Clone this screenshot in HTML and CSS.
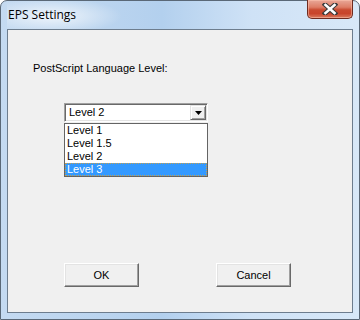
FILE: index.html
```html
<html>
<head>
    <title>EPS Settings</title>
    <meta http-equiv="content-type" content="text/html; charset=UTF-8">
    <link rel="stylesheet" href="styles.css">
</head>
<body>
    <div class="window">
        <div class="titlebar">
            <span class="title">EPS Settings</span>
            <div class="close">
                <svg width="16" height="12" viewBox="0 0 16 12">
                    <path d="M3 1.5 L13 10.5 M13 1.5 L3 10.5" stroke="#3a3a3a" stroke-width="4.6" stroke-linecap="square"/>
                    <path d="M3.5 2 L12.5 10 M12.5 2 L3.5 10" stroke="#ffffff" stroke-width="2.6" stroke-linecap="square"/>
                </svg>
            </div>
        </div>
        <div class="client">
            <div class="label">PostScript Language Level:</div>
            <div class="combo">
                <div class="combo-field">
                    <span class="combo-text">Level 2</span>
                    <span class="combo-btn">
                        <svg width="7" height="4" viewBox="0 0 7 4"><path d="M0 0 H7 L3.5 4 Z" fill="#000"/></svg>
                    </span>
                </div>
                <ul class="droplist">
                    <li>Level 1</li>
                    <li>Level 1.5</li>
                    <li>Level 2</li>
                    <li class="selected">Level 3</li>
                </ul>
            </div>
            <div class="buttons">
                <div class="button">OK</div>
                <div class="button">Cancel</div>
            </div>
        </div>
    </div>
</body>
</html>
```

FILE: styles.css
```css
body {
    margin: 0;
    background: #ffffff;
}

.window {
    width: 360px;
    height: 320px;
    box-sizing: border-box;
    border: 1px solid #5a6877;
    border-radius: 7px 7px 0 0;
    padding: 0 6px 6px 6px;
    display: flex;
    flex-direction: column;
    background: linear-gradient(to right, #c4daf1 0%, #bad4ef 30%, #b3d0ee 45%, #cfe2f6 70%, #d8e8f8 100%);
}

.titlebar {
    height: 28px;
    display: flex;
    justify-content: space-between;
    align-items: flex-start;
    background: radial-gradient(ellipse 70px 18px at 45px 15px, rgba(255, 255, 255, 0.75), rgba(255, 255, 255, 0));
}

.title {
    font-family: "Open Sans", "Noto Sans", sans-serif;
    font-size: 12px;
    color: #000;
    padding: 6px 0 0 1px;
    line-height: 16px;
}

.close {
    width: 46px;
    height: 19px;
    box-sizing: border-box;
    margin-top: -1px;
    border: 1px solid #6e2b20;
    border-top: none;
    border-radius: 0 0 5px 5px;
    background: linear-gradient(#e9a898 0%, #dd7d66 40%, #c94a30 55%, #c8442b 75%, #d97a5e 100%);
    box-shadow: inset 0 0 0 1px rgba(255, 200, 180, 0.5);
    display: flex;
    align-items: center;
    justify-content: center;
}

.client {
    flex: 1;
    border: 1px solid #6d7d8e;
    background: #f0f0f0;
    display: flex;
    flex-direction: column;
    font-family: "Liberation Sans", Arial, sans-serif;
    font-size: 11px;
    color: #000;
}

.label {
    margin: 32px 0 0 25px;
    line-height: 13px;
}

.combo {
    position: relative;
    margin: 28px 0 0 56px;
    width: 144px;
}

.combo-field {
    height: 19px;
    box-sizing: border-box;
    border: 1px solid;
    border-color: #a0a0a0 #ffffff #ffffff #a0a0a0;
    box-shadow: inset 1px 1px 0 #696969, inset -1px -1px 0 #e3e3e3;
    background: #fff;
    display: flex;
    align-items: center;
    justify-content: space-between;
    padding: 0 1px 0 3px;
}

.combo-text {
    line-height: 13px;
    padding-left: 1px;
}

.combo-btn {
    width: 16px;
    height: 15px;
    box-sizing: border-box;
    background: #f0f0f0;
    border: 1px solid;
    border-color: #e3e3e3 #696969 #696969 #e3e3e3;
    box-shadow: inset 1px 1px 0 #ffffff, inset -1px -1px 0 #a0a0a0;
    display: flex;
    align-items: center;
    justify-content: center;
}

.droplist {
    position: absolute;
    top: 20px;
    left: 0;
    width: 144px;
    box-sizing: border-box;
    margin: 0;
    padding: 0;
    list-style: none;
    border: 1px solid #646464;
    background: #fff;
}

.droplist li {
    height: 13px;
    line-height: 13px;
    padding-left: 2px;
    box-sizing: border-box;
}

.droplist li.selected {
    background: #3399ff;
    color: #fff;
    outline: 1px dotted #c4a050;
    outline-offset: -1px;
}

.buttons {
    margin-top: auto;
    margin-bottom: 25px;
    display: flex;
    gap: 77px;
    padding-left: 56px;
}

.button {
    width: 75px;
    height: 24px;
    box-sizing: border-box;
    border: 1px solid;
    border-color: #ffffff #696969 #696969 #ffffff;
    box-shadow: inset -1px -1px 0 #a0a0a0, inset 1px 1px 0 #e3e3e3;
    background: #f0f0f0;
    display: flex;
    align-items: center;
    justify-content: center;
    line-height: 13px;
}
```
